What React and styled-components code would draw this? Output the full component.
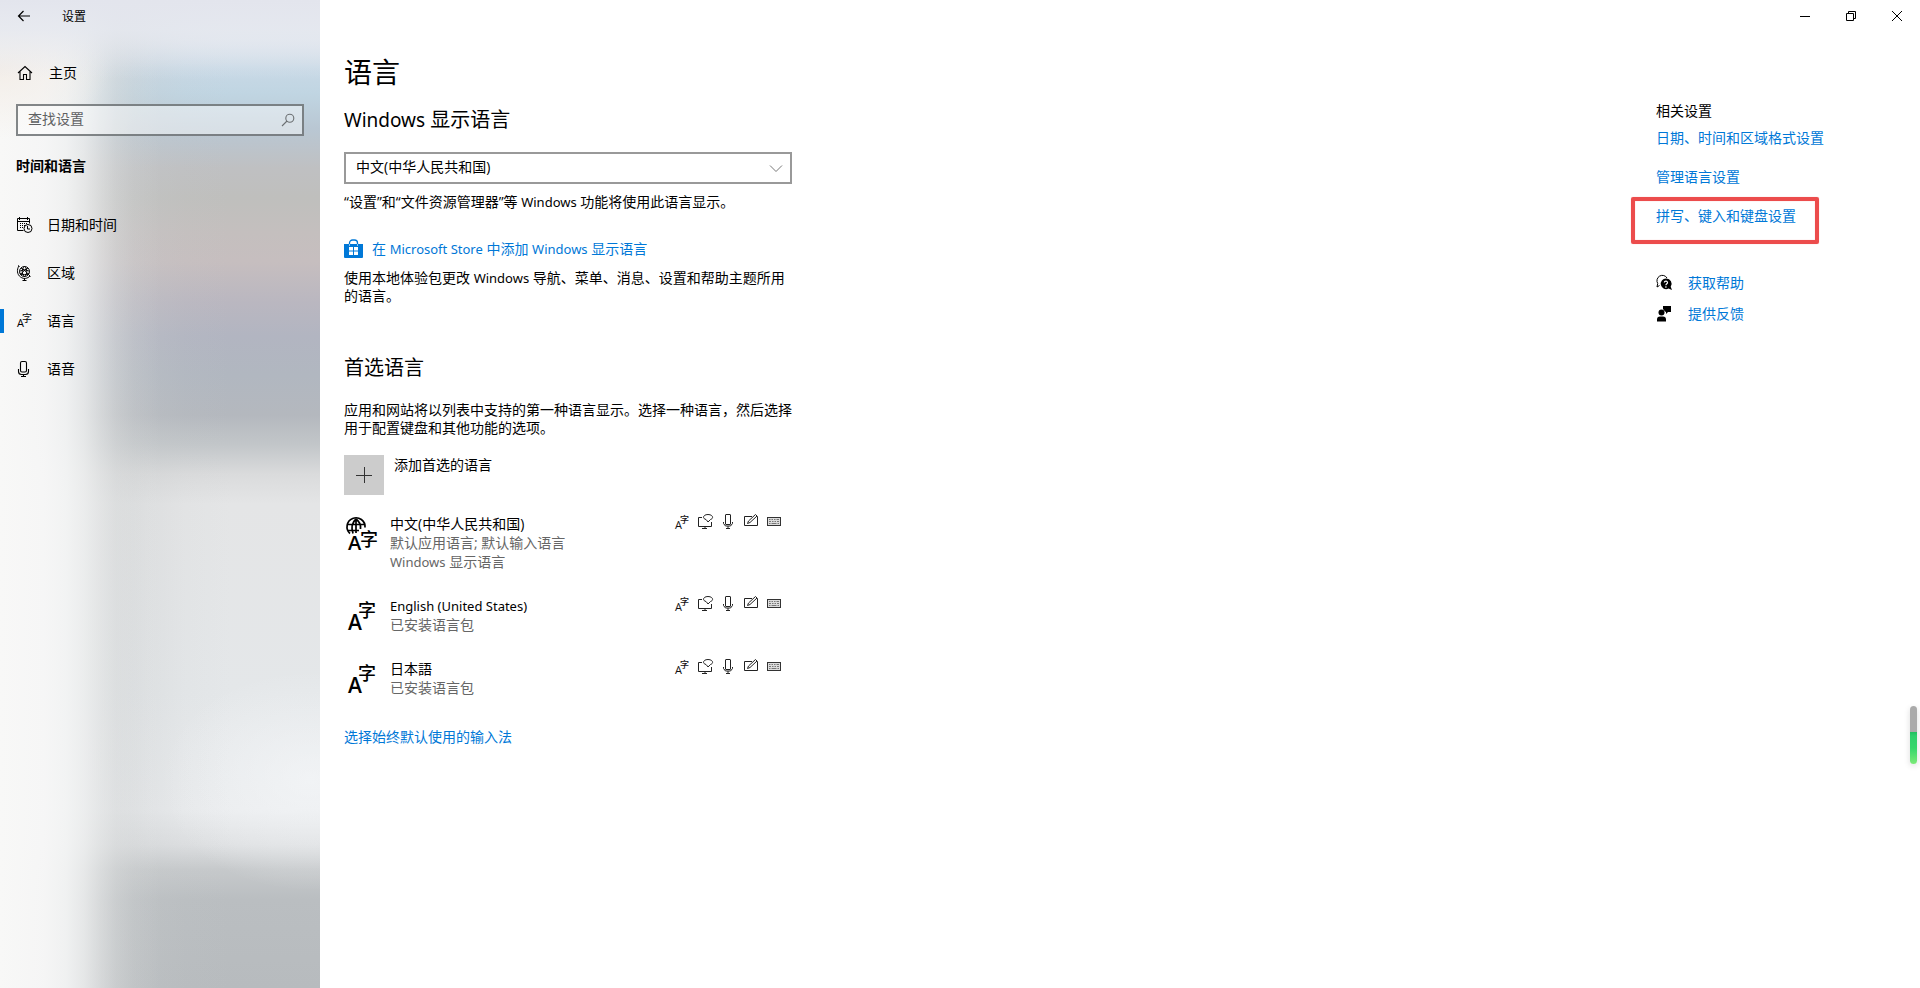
import { useState } from "react";
import styled, { createGlobalStyle } from "styled-components";

const GlobalStyle = createGlobalStyle`
  * {
    box-sizing: border-box;
  }
  body {
    margin: 0;
    background-color: #fff;
    color: #000;
    font-family: "Open Sans", "Noto Sans CJK SC", sans-serif;
    font-size: 14px;
    line-height: 18px;
  }
  h1, h2, h3, p, ul {
    margin: 0;
    padding: 0;
    font-weight: 400;
  }
  h3 {
    font-size: 14px;
  }
  ul {
    list-style: none;
  }
  button, input, select {
    font: inherit;
    color: inherit;
    border: none;
    border-radius: 0;
    background: none;
    padding: 0;
    margin: 0;
  }
  svg {
    display: block;
    flex-shrink: 0;
    overflow: visible;
  }
`;

const Window = styled.div`
  display: flex;
  min-height: 100vh;
`;

/* ---------- sidebar ---------- */

const Sidebar = styled.aside`
  width: 320px;
  flex-shrink: 0;
  background:
    linear-gradient(to bottom, #e3e5ed 0%, rgba(229, 232, 239, 0.85) 3%, rgba(229, 232, 239, 0) 8%),
    radial-gradient(ellipse 110px 70px at 0px 7%, rgba(243, 237, 231, 0.9), rgba(243, 237, 231, 0)),
    linear-gradient(
      to right,
      #f8f8f7 0px,
      rgba(247, 247, 247, 0.97) 44px,
      rgba(245, 246, 246, 0.9) 66px,
      rgba(243, 244, 244, 0.74) 84px,
      rgba(240, 241, 241, 0.5) 100px,
      rgba(238, 239, 239, 0.26) 116px,
      rgba(236, 237, 237, 0.1) 134px,
      rgba(236, 237, 237, 0) 160px
    ),
    linear-gradient(
      to right,
      rgba(196, 199, 200, 0.45) 0px,
      rgba(196, 199, 200, 0.45) 116px,
      rgba(200, 203, 204, 0.24) 150px,
      rgba(200, 203, 204, 0.08) 185px,
      rgba(200, 203, 204, 0) 230px
    ),
    radial-gradient(ellipse 150px 110px at 310px 79%, rgba(247, 249, 251, 0.6), rgba(247, 249, 251, 0)),
    linear-gradient(
      to bottom,
      #e4e6ee 0%,
      #dfe6ee 4%,
      #c8d9e6 7%,
      #c0d5e2 9.5%,
      #b9c7d3 13%,
      #bfc0c2 17%,
      #bfbfbd 20%,
      #c4bfbe 23.5%,
      #c6bebf 26.5%,
      #bab7c0 30.5%,
      #b2b5c1 34%,
      #b1b7c0 38%,
      #b4b8be 42%,
      #c2c6c9 45%,
      #dadbdc 48%,
      #e4e5e6 51%,
      #e4e7e9 70%,
      #e9ebed 82%,
      #dddfe1 85.5%,
      #c6c9cb 88%,
      #babec1 91%,
      #b7bbbe 100%
    );
`;

const TitleRow = styled.div`
  height: 34px;
  display: flex;
  align-items: center;
  gap: 30px;
  padding-left: 16px;
  font-size: 12px;
`;

const IconButton = styled.button`
  display: flex;
  align-items: center;
  justify-content: center;
`;

const HomeLink = styled.a`
  display: flex;
  align-items: center;
  gap: 16px;
  height: 40px;
  margin-top: 19px;
  padding-left: 17px;
  color: #000;
  text-decoration: none;
`;

const SearchBox = styled.label`
  display: flex;
  align-items: center;
  height: 32px;
  margin: 11px 16px 0;
  padding: 0 7px 0 10px;
  border: 2px solid rgba(90, 95, 98, 0.75);
  background-color: rgba(255, 255, 255, 0.45);
`;

const SearchInput = styled.input`
  flex: 1;
  min-width: 0;
  padding-bottom: 2px;
  outline: none;

  &::placeholder {
    color: #5f6163;
    opacity: 1;
  }
`;

const SectionTitle = styled.h2`
  margin: 21px 16px 26px;
  font-size: 14px;
  font-weight: 700;
`;

const NavItem = styled.a`
  display: flex;
  align-items: center;
  gap: 14px;
  height: 48px;
  padding-left: 17px;
  color: #000;
  text-decoration: none;
  background: ${(props) =>
    props.$active ? "linear-gradient(#0078d7, #0078d7) left center / 4px 24px no-repeat" : "none"};
`;

/* ---------- main area ---------- */

const Main = styled.main`
  flex: 1;
  min-width: 0;
`;

const WindowControls = styled.div`
  display: flex;
  justify-content: flex-end;
  height: 32px;
`;

const ControlButton = styled(IconButton)`
  width: 46px;
  height: 32px;
`;

const Columns = styled.div`
  display: flex;
  justify-content: space-between;
  padding: 20px 0 40px 24px;
`;

const Content = styled.section`
  width: 448px;
`;

const Title = styled.h1`
  font-size: 28px;
  line-height: 40px;
`;

const Heading = styled.h2`
  margin-top: ${(props) => props.$top};
  font-size: 20px;
  line-height: 28px;
`;

const Latin = styled.span`
  font-family: "Noto Sans", "Open Sans", sans-serif;
  font-size: ${(props) => (props.$large ? "19px" : "13px")};
  line-height: 1;
`;

const SelectWrap = styled.div`
  position: relative;
  margin: 18px 0 9px;
`;

const Select = styled.select`
  display: block;
  width: 100%;
  height: 32px;
  padding: 0 32px 2px 10px;
  border: 2px solid #999;
  appearance: none;
  background-color: #fff;
`;

const Chevron = styled.svg`
  position: absolute;
  right: 9px;
  top: 12px;
  pointer-events: none;
`;

const Link = styled.a`
  color: #0078d7;
  text-decoration: none;
`;

const StoreLink = styled(Link)`
  display: flex;
  align-items: center;
  gap: 9px;
  height: 20px;
  margin: 28px 0 10px;
`;

const AddRow = styled.div`
  display: flex;
  gap: 10px;
  margin: 18px 0 19px;
`;

const AddButton = styled(IconButton)`
  width: 40px;
  height: 40px;
  background-color: #ccc;
`;

const LanguageList = styled.ul`
  display: flex;
  flex-direction: column;
  gap: 25px;
  margin-bottom: 31px;
`;

const LanguageRow = styled.li`
  display: flex;
  align-items: flex-start;
  padding: 0 10px 0 2px;
  line-height: 19px;

  & > svg {
    margin: 4px 12px 0 0;
  }
`;

const LanguageText = styled.div`
  flex: 1;
`;

const Muted = styled.p`
  color: #666;
`;

const Features = styled.div`
  display: flex;
  gap: 7px;
`;

const Intro = styled.p`
  margin-top: 19px;
`;

const AddLabel = styled.label`
  padding-top: 1px;
`;

/* ---------- related settings ---------- */

const Related = styled.aside`
  width: 264px;
  padding-top: 50px;
`;

const RelatedList = styled.ul`
  display: flex;
  flex-direction: column;
  gap: 21px;
  margin: 9px 0 42px;
`;

const RelatedItem = styled.li`
  position: relative;
`;

const Highlight = styled.span`
  position: absolute;
  left: -25px;
  top: -10px;
  width: 188px;
  height: 47px;
  border: 4px solid #ec4c4c;
  border-radius: 2px;
  box-shadow: 0 0 1px #f4a0a0, inset 0 0 1px #f4a0a0;
  pointer-events: none;
`;

const SupportLink = styled(Link)`
  display: flex;
  align-items: center;
  gap: 16px;
  height: 31px;
`;

const Meter = styled.div`
  position: fixed;
  right: 3px;
  top: 706px;
  width: 7px;
  height: 58px;
  border-radius: 4px;
  background: linear-gradient(#aaa 0, #aaa 26px, #1fbf60 26px, #2ecf6c 30px, #35d76c 42px, #7cea78 100%);
  box-shadow: 0 2px 6px rgba(0, 0, 0, 0.14);
`;

/* ---------- icons ---------- */

const line = { fill: "none", stroke: "currentColor" };

function BackIcon() {
  return (
    <svg width="16" height="16" viewBox="0 0 16 16" {...line} strokeWidth="1.2">
      <path d="M14 7H2.5M7.5 2l-5 5 5 5" />
    </svg>
  );
}

function HomeIcon() {
  return (
    <svg width="16" height="16" viewBox="0 0 16 16" {...line} strokeWidth="1.1">
      <path d="M1 8l7-6.5L15 8M3 6.5v8h3.5v-5h3v5H13v-8" />
    </svg>
  );
}

function SearchIcon() {
  return (
    <svg width="14" height="14" viewBox="0 0 14 14" fill="none" stroke="#6b6f72" strokeWidth="1.1">
      <circle cx="8.8" cy="5.2" r="4" />
      <path d="M6 8L1 13" />
    </svg>
  );
}

function CalendarIcon() {
  return (
    <svg width="16" height="16" viewBox="0 0 16 16" {...line}>
      <path d="M6.5 13.5h-6v-12h12v5M.5 4.5h12M2.5 0v3M10.500 0v3" />
      <path d="M3 6.5h1m1 0h1m1 0h1m1 0h1M3 8.5h1m1 0h1m1 0h1M3 10.5h1m1 0h1" />
      <circle cx="11" cy="11.5" r="4" />
      <path d="M10.5 9v3H13" />
    </svg>
  );
}

function GlobeIcon() {
  return (
    <svg width="16" height="16" viewBox="0 0 16 16" {...line}>
      <circle cx="7.500" cy="6.5" r="5" />
      <path d="M4 3C6.500 4 10 7 11 10M11 3C8.500 4 5 7 4 10M7.500 1.500C4.500 4 4.500 9 7.500 11.500M7.500 1.500c3 2.500 3 7.500 0 10M2.500 6.500c3-2 7-2 10 0M3 8.500c3 1.500 6 1.500 9 0" />
      <path d="M2 1C-.5 4.500 0 9.500 3.500 12s7 1.500 9.500-1M1 .5l1.500 1M12 10l1.500 1.500M7.500 13v2M5.500 15.500h4" />
    </svg>
  );
}

function LanguageIcon() {
  return (
    <svg width="16" height="16" viewBox="0 0 16 16" fill="currentColor" aria-hidden="true">
      <text x="0" y="14" fontSize="11">A</text>
      <text x="5" y="9" fontSize="10">字</text>
    </svg>
  );
}

function MicIcon() {
  return (
    <svg width="16" height="16" viewBox="0 0 16 16" {...line} strokeWidth="1.1">
      <rect x="3.5" y=".5" width="6" height="10.5" rx="1.5" />
      <path d="M1.5 8v2.5a3 3 0 0 0 3 3h4a3 3 0 0 0 3-3V8M6.5 13.5v2M4 15.5h5" />
    </svg>
  );
}

function StoreIcon() {
  return (
    <svg width="19" height="20" viewBox="0 0 19 20">
      <path d="M5.5 6V4a3 3 0 0 1 3-3h2a3 3 0 0 1 3 3v2" fill="none" stroke="#0078d7" strokeWidth="1.3" />
      <path d="M0 5h19v13a1 1 0 0 1-1 1H1a1 1 0 0 1-1-1z" fill="#0078d7" />
      <path d="M5 8h4v3.5H5zM10 8h4v3.5h-4zM5 12.5h4V16H5zM10 12.5h4V16h-4z" fill="#fff" />
      <path d="M5.5 5v2M13.5 5v2" stroke="#8cc4f0" />
    </svg>
  );
}

function BigLanguageIcon({ globe }) {
  return (
    <svg width="32" height="32" viewBox="0 0 32 32" fill="currentColor" aria-hidden="true">
      {globe && (
        <path
          d="M4 15.5A9 9 0 1 1 19 9.5M1 6.5h18M1 12.5h12M10 1C5.500 5 5.500 11 7 15.500M10 1c3.500 2.500 5 6 4.500 10M10 1v14"
          fill="none"
          stroke="currentColor"
          strokeWidth="1.7"
        />
      )}
      <text x="2" y={globe ? 32 : 30} fontSize={globe ? 20 : 21} fontWeight="600">A</text>
      <text x={globe ? 14 : 12} y={globe ? 28 : 17} fontSize="18" fontWeight="500">字</text>
    </svg>
  );
}

function SmallLanguageIcon() {
  return (
    <svg width="16" height="16" viewBox="0 0 16 16" fill="#111" aria-hidden="true">
      <text x="1" y="15" fontSize="11">A</text>
      <text x="6" y="9" fontSize="9" fontWeight="500">字</text>
    </svg>
  );
}

function DisplayIcon() {
  return (
    <svg width="16" height="16" viewBox="0 0 16 16" fill="none" stroke="#222">
      <path d="M5 3.5H1.5v9h13V8M8 12.5V14M5 14.5h5" />
      <path d="M9 5.500C5 4.500 6 .5 11 .5s6 4 2.500 5L11 8 9.500 6z" />
    </svg>
  );
}

function SmallMicIcon() {
  return (
    <svg width="16" height="16" viewBox="0 0 16 16" fill="none" stroke="#222">
      <rect x="5.5" y=".5" width="5" height="10" rx=".5" />
      <path d="M3.5 8v1.5l2 2.5h5l2-2.5V8M8 12v2.5M6 14.5h4" />
    </svg>
  );
}

function PenIcon() {
  return (
    <svg width="16" height="16" viewBox="0 0 16 16" fill="none" stroke="#222">
      <path d="M9 2.5H1.5v9h13v-9h-1" />
      <path d="M4.5 9.5l1-2.5 7-6.5L14 2 7 8.5z" />
    </svg>
  );
}

function KeyboardIcon() {
  return (
    <svg width="16" height="16" viewBox="0 0 16 16" fill="none" stroke="#333">
      <rect x="1.5" y="3.5" width="13" height="8" fill="#ddd" />
      <path d="M3 5.5h1.5m1 0H7m1 0h1.5m1 0h2.5M3 7.5h2m1 0h1.5m1 0H10m1 0h2M3 9.5h1.5m1 0h5m1 0H13" stroke="#777" />
    </svg>
  );
}

function HelpIcon() {
  return (
    <svg width="16" height="16" viewBox="0 0 16 16">
      <path d="M3.5 10.5L1 12l.7-3.500A5.300 5.300 0 1 1 11 3" fill="none" stroke="#000" />
      <path d="M10 3.500a5.300 5.300 0 1 0 2.500 10L16 15l-1.300-3.200A5.300 5.300 0 0 0 10 3.500z" />
      <path d="M8.300 7.500c.2-2 3.400-1.700 3.200.2 0 1-1.600 1.200-1.600 2.500M9.900 11.300v1.400" fill="none" stroke="#fff" strokeWidth="1.2" />
    </svg>
  );
}

function FeedbackIcon() {
  return (
    <svg width="16" height="16" viewBox="0 0 16 16">
      <circle cx="5.5" cy="6.5" r="3" />
      <path d="M1 15.500v-2a3 3 0 0 1 3-3h3a3 3 0 0 1 3 3v2zM7 0h8v6h-3l-2 2V6L9 5.500 7 3z" />
    </svg>
  );
}

const navItems = [
  { label: "日期和时间", icon: <CalendarIcon /> },
  { label: "区域", icon: <GlobeIcon /> },
  { label: "语言", icon: <LanguageIcon />, active: true },
  { label: "语音", icon: <MicIcon /> },
];

const languages = [
  {
    id: "zh",
    name: "中文(中华人民共和国)",
    globe: true,
    details: ["默认应用语言; 默认输入语言", <><Latin>Windows</Latin> 显示语言</>],
  },
  { id: "en", name: <Latin>English (United States)</Latin>, details: ["已安装语言包"] },
  { id: "ja", name: "日本語", details: ["已安装语言包"] },
];

function App() {
  const [query, setQuery] = useState("");

  return (
    <Window>
      <GlobalStyle />
      <Sidebar>
        <TitleRow>
          <IconButton aria-label="返回"><BackIcon /></IconButton>
          <span>设置</span>
        </TitleRow>
        <HomeLink href="#home"><HomeIcon />主页</HomeLink>
        <SearchBox>
          <SearchInput
            type="text"
            aria-label="查找设置"
            placeholder="查找设置"
            value={query}
            onChange={(e) => setQuery(e.target.value)}
          />
          <SearchIcon />
        </SearchBox>
        <SectionTitle>时间和语言</SectionTitle>
        <nav>
          {navItems.map((item) => (
            <NavItem key={item.label} href="#nav" $active={item.active}>
              {item.icon}
              {item.label}
            </NavItem>
          ))}
        </nav>
      </Sidebar>

      <Main>
        <WindowControls>
          <ControlButton aria-label="最小化">
            <svg width="10" height="10" viewBox="0 0 10 10" {...line}><path d="M0 5.5h10" /></svg>
          </ControlButton>
          <ControlButton aria-label="还原">
            <svg width="10" height="10" viewBox="0 0 10 10" {...line}>
              <path d="M.5 2.5h7v7h-7zM2.5 2.5v-2h7v7h-2" />
            </svg>
          </ControlButton>
          <ControlButton aria-label="关闭">
            <svg width="10" height="10" viewBox="0 0 10 10" {...line}><path d="M0 0l10 10M10 0L0 10" /></svg>
          </ControlButton>
        </WindowControls>

        <Columns>
          <Content>
            <Title>语言</Title>
            <Heading $top="14px"><Latin $large>Windows</Latin> 显示语言</Heading>
            <SelectWrap>
              <Select aria-label="Windows 显示语言">
                <option>中文(中华人民共和国)</option>
              </Select>
              <Chevron width="14" height="9" viewBox="0 0 14 9" fill="none" stroke="#777">
                <path d="M1 1.5l6 6 6-6" />
              </Chevron>
            </SelectWrap>
            <p>“设置”和“文件资源管理器”等 <Latin>Windows</Latin> 功能将使用此语言显示。</p>
            <StoreLink href="#store">
              <StoreIcon />
              <span>在 <Latin>Microsoft Store</Latin> 中添加 <Latin>Windows</Latin> 显示语言</span>
            </StoreLink>
            <p>使用本地体验包更改 <Latin>Windows</Latin> 导航、菜单、消息、设置和帮助主题所用的语言。</p>

            <Heading $top="49px">首选语言</Heading>
            <Intro>应用和网站将以列表中支持的第一种语言显示。选择一种语言，然后选择用于配置键盘和其他功能的选项。</Intro>
            <AddRow>
              <AddButton id="add-language">
                <svg width="16" height="16" viewBox="0 0 16 16" fill="none" stroke="#333">
                  <path d="M0 8.5h16M8.5 0v16" />
                </svg>
              </AddButton>
              <AddLabel htmlFor="add-language">添加首选的语言</AddLabel>
            </AddRow>

            <LanguageList>
              {languages.map((language) => (
                <LanguageRow key={language.id}>
                  <BigLanguageIcon globe={language.globe} />
                  <LanguageText>
                    <p lang={language.id}>{language.name}</p>
                    {language.details.map((detail, i) => (
                      <Muted key={i}>{detail}</Muted>
                    ))}
                  </LanguageText>
                  <Features>
                    <SmallLanguageIcon />
                    <DisplayIcon />
                    <SmallMicIcon />
                    <PenIcon />
                    <KeyboardIcon />
                  </Features>
                </LanguageRow>
              ))}
            </LanguageList>
            <Link href="#input">选择始终默认使用的输入法</Link>
          </Content>

          <Related>
            <h3>相关设置</h3>
            <RelatedList>
              <RelatedItem><Link href="#region">日期、时间和区域格式设置</Link></RelatedItem>
              <RelatedItem><Link href="#admin">管理语言设置</Link></RelatedItem>
              <RelatedItem>
                <Link href="#typing">拼写、键入和键盘设置</Link>
                <Highlight />
              </RelatedItem>
            </RelatedList>
            <SupportLink href="#help"><HelpIcon />获取帮助</SupportLink>
            <SupportLink href="#feedback"><FeedbackIcon />提供反馈</SupportLink>
          </Related>
        </Columns>
      </Main>
      <Meter />
    </Window>
  );
}

export default App;
